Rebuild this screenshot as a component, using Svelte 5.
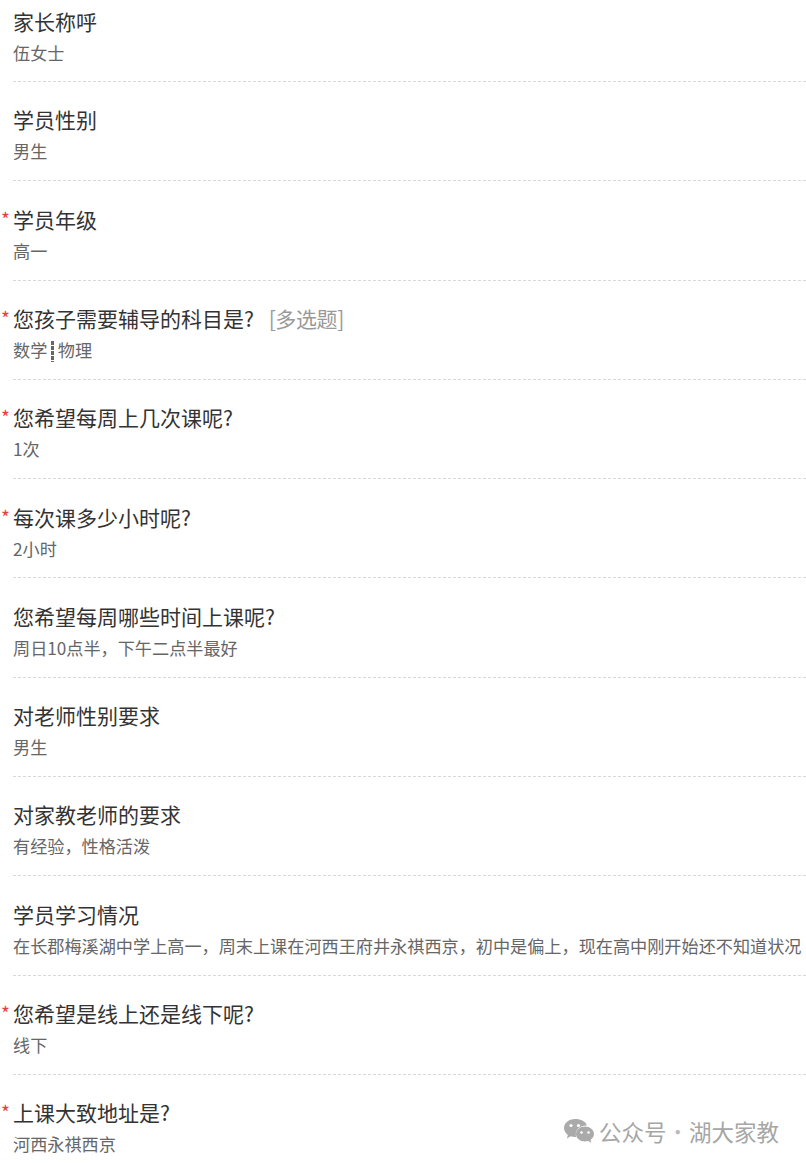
<script>
  const comma = "\uFF0C";
  const rows = [
    { q: "家长称呼", a: "伍女士" },
    { q: "学员性别", a: "男生" },
    { q: "学员年级", a: "高一", required: true },
    { q: "您孩子需要辅导的科目是?", a: ["数学", "物理"], required: true, tag: "[多选题]" },
    { q: "您希望每周上几次课呢?", a: "1次", required: true },
    { q: "每次课多少小时呢?", a: "2小时", required: true },
    { q: "您希望每周哪些时间上课呢?", a: `周日10点半${comma}下午二点半最好` },
    { q: "对老师性别要求", a: "男生" },
    { q: "对家教老师的要求", a: `有经验${comma}性格活泼` },
    { q: "学员学习情况", a: `在长郡梅溪湖中学上高一${comma}周末上课在河西王府井永祺西京${comma}初中是偏上${comma}现在高中刚开始还不知道状况` },
    { q: "您希望是线上还是线下呢?", a: "线下", required: true },
    { q: "上课大致地址是?", a: "河西永祺西京", required: true },
  ];
</script>

<div class="page">
  {#each rows as row}
    <div class="row">
      <div class="question">
        {#if row.required}<span class="star">*</span>{/if}
        {row.q}
        {#if row.tag}<span class="tag">{row.tag}</span>{/if}
      </div>
      <div class="answer">
        {#if Array.isArray(row.a)}
          {row.a[0]}<span class="sep"></span>{row.a[1]}
        {:else}
          {row.a}
        {/if}
      </div>
    </div>
  {/each}

  <div class="watermark">
    <svg width="32" height="26" viewBox="0 0 32 26">
      <path d="M12 1C5.900 1 1 5 1 10c0 2.800 1.500 5.200 3.900 6.900L3.800 20.400l4-2.100c1.300.4 2.700.7 4.200.7.4 0 .8 0 1.200-.1-.3-.9-.4-1.800-.4-2.700 0-5 4.600-8.800 10.200-8.800h.9C22.900 3.700 18 1 12 1z" fill="#aaa" />
      <path d="M31 16c0-4.200-4.100-7.500-9-7.500S13 11.800 13 16s4.100 7.500 9 7.500c1.100 0 2.100-.2 3.100-.5l3.300 1.800-.9-3c2.100-1.400 3.500-3.500 3.500-5.800z" fill="#aaa" />
      <circle cx="8" cy="7.500" r="1.600" fill="#fff" />
      <circle cx="15.500" cy="7.500" r="1.600" fill="#fff" />
      <circle cx="18.500" cy="14.500" r="1.300" fill="#fff" />
      <circle cx="25.500" cy="14.500" r="1.300" fill="#fff" />
    </svg>
    <span>公众号<span class="dot">·</span>湖大家教</span>
  </div>
</div>

<style>
  :global(body) {
    margin: 0;
    background: #fff;
  }
  .page {
    position: relative;
    height: 1163px;
    overflow: hidden;
    font-family: "Noto Sans CJK SC", "Liberation Sans", sans-serif;
  }
  .row {
    box-sizing: border-box;
    height: 99.3px;
    margin-left: 13px;
    padding-top: 22.4px;
    border-bottom: 1px dashed #d9d9d9;
  }
  .row:first-child {
    height: 82px;
    padding-top: 6px;
  }
  .row:last-of-type {
    border-bottom: 0;
  }
  .question {
    position: relative;
    font-size: 21px;
    line-height: 31px;
    color: #333;
  }
  .star {
    position: absolute;
    left: -12px;
    top: -1px;
    color: #e8413b;
    font-size: 19px;
  }
  .tag {
    margin-left: 10px;
    letter-spacing: -0.4px;
    color: #999;
  }
  .answer {
    font-size: 17.15px;
    line-height: 32px;
    color: #666;
    white-space: nowrap;
  }
  .sep {
    display: inline-block;
    width: 3px;
    height: 21px;
    margin: 0 4px 0 3.5px;
    vertical-align: -5px;
    background: repeating-linear-gradient(#666 0 4px, #fff 4px 5px);
  }
  .watermark {
    position: absolute;
    left: 563px;
    top: 1116px;
    display: flex;
    align-items: center;
    gap: 4px;
    font-size: 22.5px;
    line-height: 30px;
    color: #a6a6a6;
    white-space: nowrap;
  }
  .dot {
    color: #bbb;
    font-weight: 300;
  }
</style>
